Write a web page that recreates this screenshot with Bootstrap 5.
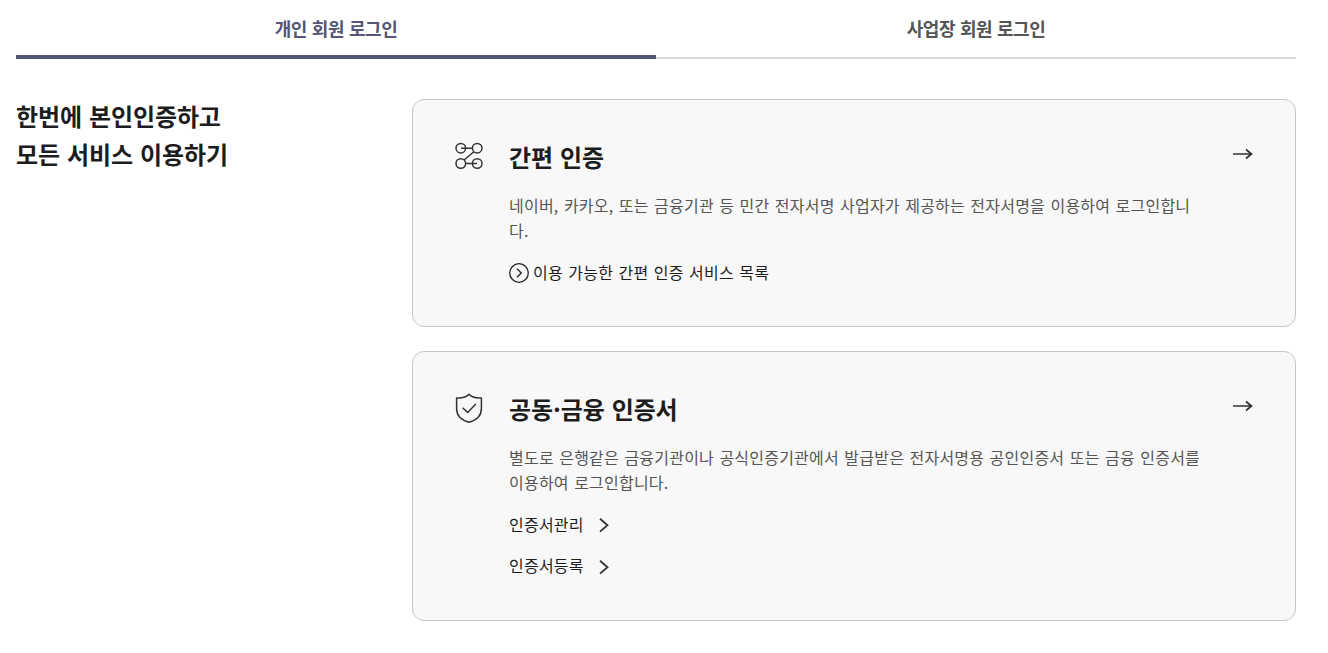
<!DOCTYPE html>
<html lang="ko">
<head>
    <meta charset="UTF-8">
    <meta name="viewport" content="width=device-width, initial-scale=1">
    <title>로그인</title>
    <link href="https://cdn.jsdelivr.net/npm/bootstrap@5.3.3/dist/css/bootstrap.min.css" rel="stylesheet">
    <script src="https://cdn.jsdelivr.net/npm/bootstrap@5.3.3/dist/js/bootstrap.bundle.min.js"></script>
    <style>
        body {
            font-family: "Noto Sans CJK KR", "Noto Sans", sans-serif;
            color: #1d1d1d;
            word-break: keep-all;
        }
        .login-page {
            width: 1328px;
            padding: 0 32px 0 16px;
        }
        .login-tabs .nav-link {
            height: 59px;
            border: 0;
            border-bottom: 2px solid #d8d8d8;
            border-radius: 0;
            color: #555;
            font-size: 18px;
            font-weight: 700;
            line-height: 57px;
            letter-spacing: -.45px;
            word-spacing: .3px;
            padding: 0;
        }
        .login-tabs .nav-link.active {
            border-bottom: 4px solid #545675;
            color: #545675;
        }
        .login-body {
            margin-top: 40px;
        }
        .page-title, .auth-title {
            font-size: 24px;
            font-weight: 700;
            line-height: 37.5px;
            letter-spacing: -.1px;
            word-spacing: .4px;
            margin: -2px 0 2px;
        }
        .auth-list {
            width: 884px;
        }
        .auth-card {
            background: #f8f8f8;
            border: 1px solid #c6c6c6;
            border-radius: 12px;
            padding: 40px 42px 40px 40px;
        }
        .auth-icon {
            width: 32px;
            height: 32px;
            margin-right: 24px;
        }
        .auth-desc, .auth-link {
            font-size: 16px;
            line-height: 25.5px;
            letter-spacing: .22px;
            word-spacing: .7px;
        }
        .auth-desc, .auth-link span {
            margin: -1px 0 1px;
        }
        .auth-desc {
            color: #555;
        }
        .auth-link {
            color: #1d1d1d;
            text-decoration: none;
        }
        .auth-link .link-arrow {
            margin-left: 15px;
        }
    </style>
</head>
<body>

<div class="login-page">
    <ul class="nav nav-fill nav-justified login-tabs">
        <li class="nav-item"><a class="nav-link active" href="#">개인 회원 로그인</a></li>
        <li class="nav-item"><a class="nav-link" href="#">사업장 회원 로그인</a></li>
    </ul>

    <div class="login-body d-flex justify-content-between align-items-start">
        <h2 class="page-title">한번에 본인인증하고<br>모든 서비스 이용하기</h2>

        <div class="auth-list d-flex flex-column gap-4">
            <div class="auth-card d-flex align-items-start">
                <svg class="auth-icon flex-shrink-0" viewBox="0 0 32 32" fill="none" stroke="#333" stroke-width="1.5">
                    <circle cx="7.8" cy="8.2" r="4.8"/>
                    <circle cx="24.2" cy="8.2" r="4.8"/>
                    <circle cx="7.8" cy="23.5" r="4.8"/>
                    <circle cx="24.2" cy="23.5" r="4.8"/>
                    <path d="M8 8.2h11.4M20.9 11.7L11.1 20M12.6 23.5H24"/>
                </svg>
                <div class="flex-grow-1 d-flex flex-column align-items-start gap-3">
                    <h3 class="auth-title">간편 인증</h3>
                    <p class="auth-desc">네이버, 카카오, 또는 금융기관 등 민간 전자서명 사업자가 제공하는 전자서명을 이용하여 로그인합니<br>다.</p>
                    <a class="auth-link d-flex align-items-center" href="#">
                        <svg class="me-1" width="20" height="20" viewBox="0 0 20 20" fill="none" stroke="#222" stroke-width="1.3">
                            <circle cx="10" cy="10" r="9.3"/>
                            <path d="M8 5.8l4.3 4.2L8 14.2"/>
                        </svg>
                        <span>이용 가능한 간편 인증 서비스 목록</span>
                    </a>
                </div>
                <svg class="mt-1" width="20" height="20" viewBox="0 0 20 20" fill="none" stroke="#333" stroke-width="1.7">
                    <path d="M0 10h18.5M13 5.5l5.5 4.5-5.5 4.5"/>
                </svg>
            </div>

            <div class="auth-card d-flex align-items-start">
                <svg class="auth-icon flex-shrink-0" viewBox="0 0 32 32" fill="none" stroke="#333" stroke-width="1.5" stroke-linejoin="round">
                    <path d="M16 2.2c-2.7 3.2-7 4-12.4 3.7v10.5c0 7 5.2 11.8 12.4 13.8 7.2-2 12.4-6.8 12.4-13.8V5.9C23 6.2 18.7 5.4 16 2.2z"/>
                    <path d="M9.6 15.8l5.1 4.6 8.1-8.4"/>
                </svg>
                <div class="flex-grow-1 d-flex flex-column align-items-start gap-3">
                    <h3 class="auth-title">공동·금융 인증서</h3>
                    <p class="auth-desc">별도로 은행같은 금융기관이나 공식인증기관에서 발급받은 전자서명용 공인인증서 또는 금융 인증서를<br>이용하여 로그인합니다.</p>
                    <a class="auth-link d-flex align-items-center" href="#">
                        <span>인증서관리</span>
                        <svg class="link-arrow" width="12" height="16" viewBox="0 0 12 16" fill="none" stroke="#333" stroke-width="1.8">
                            <path d="M1 1.8l7.5 6.4L1 14.6"/>
                        </svg>
                    </a>
                    <a class="auth-link d-flex align-items-center" href="#">
                        <span>인증서등록</span>
                        <svg class="link-arrow" width="12" height="16" viewBox="0 0 12 16" fill="none" stroke="#333" stroke-width="1.8">
                            <path d="M1 1.8l7.5 6.4L1 14.6"/>
                        </svg>
                    </a>
                </div>
                <svg class="mt-1" width="20" height="20" viewBox="0 0 20 20" fill="none" stroke="#333" stroke-width="1.7">
                    <path d="M0 10h18.5M13 5.5l5.5 4.5-5.5 4.5"/>
                </svg>
            </div>
        </div>
    </div>
</div>

</body>
</html>
